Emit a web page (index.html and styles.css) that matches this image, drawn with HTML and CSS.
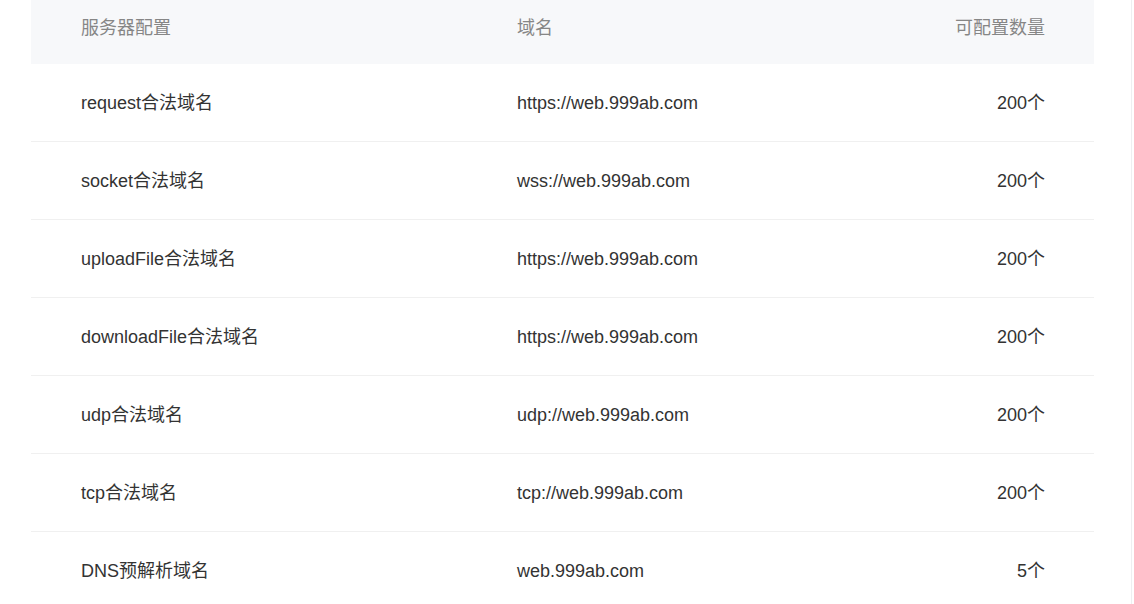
FILE: index.html
```html
<!DOCTYPE html>
<html lang="zh-CN">
<head>
<meta charset="utf-8">
<title>服务器配置</title>
<link rel="stylesheet" href="styles.css">
</head>
<body>
<div class="page">
  <div class="table">
    <div class="row head">
      <div class="cell c1">服务器配置</div>
      <div class="cell c2">域名</div>
      <div class="cell c3">可配置数量</div>
    </div>
    <div class="row">
      <div class="cell c1">request合法域名</div>
      <div class="cell c2">https://web.999ab.com</div>
      <div class="cell c3">200个</div>
    </div>
    <div class="row">
      <div class="cell c1">socket合法域名</div>
      <div class="cell c2">wss://web.999ab.com</div>
      <div class="cell c3">200个</div>
    </div>
    <div class="row">
      <div class="cell c1">uploadFile合法域名</div>
      <div class="cell c2">https://web.999ab.com</div>
      <div class="cell c3">200个</div>
    </div>
    <div class="row">
      <div class="cell c1">downloadFile合法域名</div>
      <div class="cell c2">https://web.999ab.com</div>
      <div class="cell c3">200个</div>
    </div>
    <div class="row">
      <div class="cell c1">udp合法域名</div>
      <div class="cell c2">udp://web.999ab.com</div>
      <div class="cell c3">200个</div>
    </div>
    <div class="row">
      <div class="cell c1">tcp合法域名</div>
      <div class="cell c2">tcp://web.999ab.com</div>
      <div class="cell c3">200个</div>
    </div>
    <div class="row last">
      <div class="cell c1">DNS预解析域名</div>
      <div class="cell c2">web.999ab.com</div>
      <div class="cell c3">5个</div>
    </div>
  </div>
</div>
</body>
</html>
```
FILE: styles.css
```css
html, body {
  margin: 0;
  padding: 0;
  background: #fff;
  overflow: hidden;
}
body {
  font-family: "Liberation Sans", "Noto Sans CJK SC", sans-serif;
  font-size: 18px;
  color: #333;
}
.page {
  width: 1132px;
  height: 604px;
  border-right: 1px solid #eeeff1;
  padding-left: 31px;
  box-sizing: border-box;
}
.table {
  width: 1063px;
}
.row {
  display: grid;
  grid-template-columns: 436px 1fr 200px;
  align-items: center;
  height: 77px;
  border-bottom: 1px solid #f0f0f0;
  padding: 0 49px 0 50px;
  line-height: 20px;
}
.row.head {
  height: 64px;
  border-bottom: none;
  background: #f7f8fa;
  color: #868686;
  padding-bottom: 9px;
  box-sizing: border-box;
}
.row.last {
  border-bottom: none;
}
.c3 {
  text-align: right;
}
```
